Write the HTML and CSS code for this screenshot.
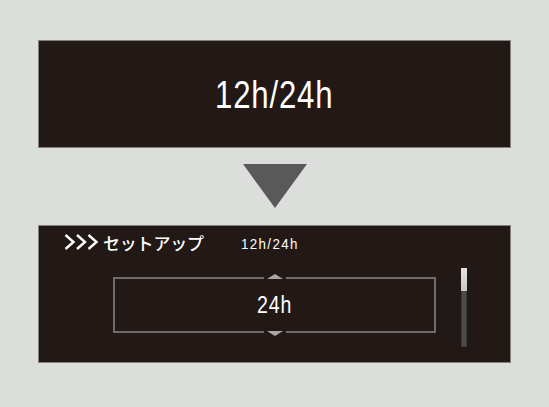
FILE: index.html
```html
<!DOCTYPE html>
<html lang="ja">
<head>
    <meta charset="UTF-8">
    <meta name="viewport" content="width=device-width, initial-scale=1.0">
    <title>12h/24h</title>
    <link rel="stylesheet" href="styles.css">
</head>
<body>
    <div class="page">
        <div class="panel title-panel">
            <span class="condensed title-text">12h/24h</span>
        </div>

        <div class="down-arrow"></div>

        <div class="panel setup-panel">
            <div class="setup-header">
                <svg class="chevrons" width="35" height="16" viewBox="0 0 35 16">
                    <polyline points="1.5,1 9.5,8 1.5,15" />
                    <polyline points="13,1 21,8 13,15" />
                    <polyline points="24.5,1 32.5,8 24.5,15" />
                </svg>
                <span class="setup-label">セットアップ</span>
                <span class="condensed setup-item">12h/24h</span>
            </div>

            <div class="setup-body">
                <div class="picker">
                    <span class="picker-arrow up"></span>
                    <span class="condensed picker-value">24h</span>
                    <span class="picker-arrow down"></span>
                </div>
                <div class="scrollbar">
                    <div class="scrollbar-thumb"></div>
                </div>
            </div>
        </div>
    </div>
</body>
</html>
```

FILE: styles.css
```css
:root {
    --page-bg: #dcdedc;
    --panel-bg: #221816;
    --panel-edge: #85817f;
    --line: #6f6d6b;
}

* {
    margin: 0;
    padding: 0;
    box-sizing: border-box;
}

body {
    background: var(--page-bg);
    font-family: "Liberation Sans", Arial, sans-serif;
    color: #fff;
}

.page {
    width: 473px;
    margin-left: 38px;
    padding-top: 40px;
}

.panel {
    background: var(--panel-bg);
    border: 1px solid var(--panel-edge);
}

/* no narrow face installed, so squeeze the regular one */
.condensed {
    display: inline-block;
    transform: scaleX(0.82);
    transform-origin: center;
}

/* top caption */
.title-panel {
    height: 108px;
    display: flex;
    align-items: center;
    justify-content: center;
}

.title-text {
    font-size: 38px;
    letter-spacing: 1px;
    line-height: 1;
    padding-top: 2px;
}

.down-arrow {
    width: 0;
    height: 0;
    margin: 16px auto 17px;
    border-left: 32px solid transparent;
    border-right: 32px solid transparent;
    border-top: 44px solid #595959;
}

/* setup screen */
.setup-panel {
    height: 138px;
}

.setup-header {
    height: 31px;
    display: flex;
    align-items: center;
    padding-left: 25px;
    padding-top: 1px;
}

.chevrons {
    fill: none;
    stroke: #fff;
    stroke-width: 2.4;
}

.setup-label {
    margin-left: 4px;
    font-family: "Noto Sans CJK JP", sans-serif;
    font-size: 17px;
    font-weight: 500;
    letter-spacing: -0.2px;
}

.setup-item {
    margin-left: 37px;
    margin-top: 4px;
    font-size: 15.5px;
    letter-spacing: 1.6px;
    transform: scaleX(0.86);
    transform-origin: left center;
}

.setup-body {
    display: grid;
    grid-template-columns: 1fr 323px 1fr;
    align-items: start;
    margin-top: 11px;
}

.picker {
    grid-column: 2;
    position: relative;
    height: 56px;
    margin-top: 9px;
    border: 2px solid var(--line);
    display: flex;
    align-items: center;
    justify-content: center;
}

.picker-value {
    font-size: 23px;
    letter-spacing: 1px;
    padding-top: 1px;
    transform: scaleX(0.85);
}

/* the arrows sit on the box edge and cut a gap into it */
.picker-arrow {
    position: absolute;
    left: 50%;
    width: 22px;
    height: 7px;
    margin-left: -11px;
    background: var(--panel-bg);
}

.picker-arrow::after {
    content: "";
    position: absolute;
    left: 3px;
    border-left: 8px solid transparent;
    border-right: 8px solid transparent;
}

.picker-arrow.up {
    top: -5px;
}

.picker-arrow.up::after {
    top: 0;
    border-bottom: 5px solid #a9a9a9;
}

.picker-arrow.down {
    bottom: -6px;
}

.picker-arrow.down::after {
    top: 1px;
    border-top: 5px solid #a9a9a9;
}

.scrollbar {
    grid-column: 3;
    justify-self: start;
    margin-left: 25px;
    width: 6px;
    height: 79px;
    background: #4b4b4b;
    border: 1px solid #3a3a3a;
}

.scrollbar-thumb {
    height: 23px;
    margin: -1px;
    background: linear-gradient(#e4e4e4, #c9c9c9);
}
```
